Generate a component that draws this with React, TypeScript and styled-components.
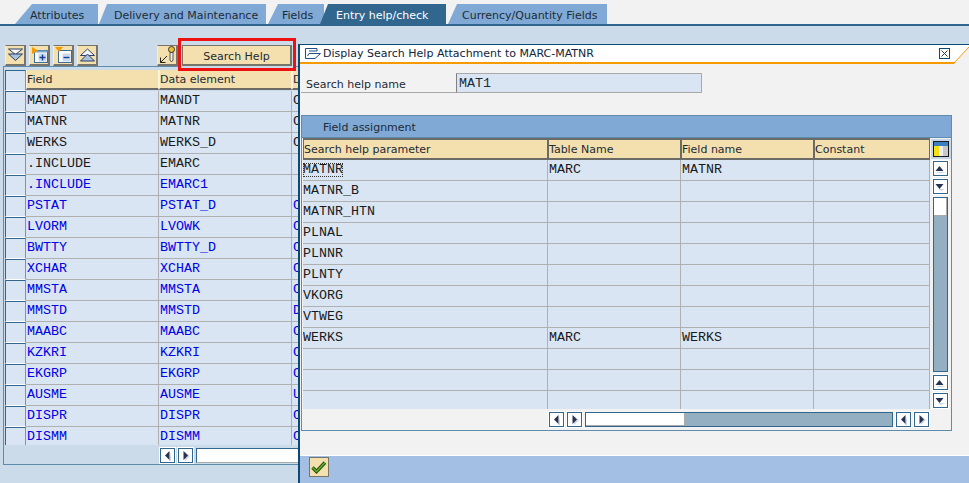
import React from 'react';
import styled, { createGlobalStyle } from 'styled-components';

const UI = '"DejaVu Sans", Tahoma, sans-serif';
const MONO = '"Liberation Mono", monospace';

const Global = createGlobalStyle`
  html, body { margin: 0; padding: 0; width: 969px; height: 483px; overflow: hidden; background: #f2f2f2; }
  * { box-sizing: border-box; }
`;
const Page = styled.div`
  width: 969px; height: 483px; position: relative; overflow: hidden;
  display: flex; flex-direction: column; background: #cbdbea;
  font-family: ${UI}; font-size: 11px; color: #1c2b36;
`;
const TabStrip = styled.div`
  height: 26px; flex: none; display: flex; align-items: flex-end; padding: 4px 0 0 15px;
  background: #f2f2f2; border-bottom: 2px solid #31678f;
`;
const Tab = styled.div<{ $w: number; $slope: number; $pad: number; $active?: boolean; $gap?: number }>`
  width: ${p => p.$w}px; height: 20px; flex: none; margin-right: ${p => p.$gap ?? 1}px;
  display: flex; align-items: center; white-space: nowrap; padding: 2px 0 0 ${p => p.$pad}px;
  background: ${p => (p.$active ? '#31678f' : '#81a9d6')};
  color: ${p => (p.$active ? '#ffffff' : '#1c2b36')};
  clip-path: polygon(0 100%, ${p => p.$slope}px 0, 100% 0, 100% 100%);
`;
const Left = styled.div`flex: 1; display: flex; flex-direction: column; padding: 19px 0 0 3px; min-height: 0;`;
const Toolbar = styled.div`height: 21px; flex: none; display: flex; gap: 3px; padding: 0 0 0 2px; align-items: flex-start;`;
const IconBtn = styled.div<{ $after?: number }>`
  width: 21px; height: 21px; flex: none; background: #f3e0ae; border: 1px solid #77746c;
  border-left-color: #f8eed0; border-right-width: 2px; border-bottom-width: 2px;
  display: flex; align-items: center; justify-content: center;
  margin-right: ${p => p.$after ?? 0}px;
`;
const SearchHelpOuter = styled.div`
  position: absolute; left: 178px; top: 38px; width: 118px; height: 33px; border: 3px solid #ee1111;
  background: #cbdbea; padding: 4px 1px 2px 1px;
`;
const SearchHelpBtn = styled.div`
  width: 100%; height: 100%; display: flex; align-items: center; justify-content: center; padding-top: 2px;
  background: #f3e0ae; border: 1px solid #77746c; border-right-width: 2px; border-bottom-width: 2px;
`;
const Frame = styled.div`
  width: 400px; height: 399px; border: 1px solid #5d8cac; border-right: none; padding: 3px 0 0 1px;
  display: flex; flex-direction: column;
`;
const LeftRow = styled.div`display: flex; height: 21px; flex: none;`;
const Sel = styled.div`width: 21px; flex: none; background: #d9e5f3; border: 1px solid #ffffff; border-left-color: #31678f; border-top-color: #31678f; border-right: 1px solid #6d9ab5;`;
const Hdr = styled.div<{ $w: number }>`
  width: ${p => p.$w}px; flex: none; height: 20px; line-height: 17px; padding-top: 1px;
  background: #f3e0ae; border-left: 1px solid #fbf3dc; border-right: 1px solid #fbf3dc; border-bottom: 2px solid #6a6a66; white-space: nowrap; overflow: hidden;
`;
const Cell = styled.div<{ $w: number; $blue?: boolean; $flush?: boolean }>`
  width: ${p => p.$w}px; flex: none; height: 21px; line-height: 20px; padding-left: ${p => (p.$flush ? 0 : 1)}px;
  background: #d9e5f3; border-right: 1px solid #b0b0b0; border-bottom: 1px solid #b0b0b0;
  font-family: ${MONO}; font-size: 13.33px; white-space: pre; overflow: hidden;
  color: ${p => (p.$blue ? '#0000e6' : '#1a1a1a')};
`;
const LeftBody = styled.div`height: 354px; overflow: hidden; flex: none;`;
const LeftScrollRow = styled.div`display: flex; align-items: center; gap: 3px; padding: 0 0 0 155px; margin-top: 3px;`;
const ScrollBtn = styled.div`
  width: 15px; height: 15px; flex: none; background: #fff; border: 1px solid #31678f; box-shadow: 0 0 0 1px #ffffff;
  display: flex; align-items: center; justify-content: center;
`;
const Track = styled.div<{ $w: number }>`
  width: ${p => p.$w}px; height: 15px; flex: none; background: #fff;
  border: 1px solid #31678f; border-right-color: #aaa; border-bottom-color: #aaa;
`;
const Popup = styled.div`
  position: absolute; left: 298px; top: 44px; width: 671px; height: 439px;
  border-left: 2px solid #0c4a76; display: flex; flex-direction: column; background: #f2f2f2;
`;
const TitleBar = styled.div`
  height: 20px; flex: none; display: flex; align-items: center; gap: 1px; padding-left: 4px;
  background: #fff; border-top: 1px solid #0c4a76; border-bottom: 2px solid #f59a00;
  position: relative; color: #12243a;
`;
const TitleText = styled.span`flex: 1; white-space: nowrap;`;
const CloseBox = styled.div`
  width: 11px; height: 11px; margin-right: 19px; border: 1px solid #0c4a76; display: flex; align-items: center; justify-content: center;
`;
const Corner = styled.svg`position: absolute; right: 0; top: 0; width: 15px; height: 19px;`;
const PopupBody = styled.div`flex: 1; min-height: 0; padding: 9px 18px 0 1px; display: flex; flex-direction: column;`;
const NameRow = styled.div`display: flex; height: 20px; flex: none;`;
const NameLabel = styled.div`
  width: 155px; height: 20px; padding-left: 5px; line-height: 23px; border-bottom: 1px solid #a9a9a9;
`;
const NameField = styled.div`
  width: 246px; height: 20px; background: #d9e5f3; border: 1px solid #a9a9a9; border-left: 1px solid #808080;
  padding-left: 2px; line-height: 19px; font-family: ${MONO}; font-size: 13.33px;
`;
const Group = styled.div`
  margin-top: 22px; width: 651px; height: 316px; border: 1px solid #5d8cac; border-top: none;
  display: flex; flex-direction: column;
`;
const GroupTitle = styled.div`
  height: 23px; flex: none; background: #81a9d6; border-top: 1px solid #5d8cac; border-bottom: 1px solid #5d8cac; padding-left: 21px;
  line-height: 23px;
`;
const GridWrap = styled.div`display: flex; flex: 1; min-height: 0;`;
const GridMain = styled.div`width: 628px; flex: none; display: flex; flex-direction: column; padding-left: 1px;`;
const PopRow = styled.div`display: flex; flex: none;`;
const PopHdr = styled(Hdr)`
  height: 22px; border-top: 2px solid #6a6a66; border-left: 1px solid #6a6a66; border-right: 1px solid #6a6a66; line-height: 17px;
`;
const PopBodyClip = styled.div`height: 249px; overflow: hidden; flex: none;`;
const Focus = styled.span`
  display: inline-block; height: 14px; line-height: 13px; margin-top: 3px; outline: 1px dotted #333333; outline-offset: -1px; vertical-align: top;
`;
const HScroll = styled.div`display: flex; gap: 3px; padding: 3px 0 0 246px; align-items: center; background: #f2f2f2;`;
const HTrack = styled.div`display: flex; width: 308px; height: 15px; flex: none; border: 1px solid #31678f; background: #93afc1;`;
const HThumb = styled.div`width: 100px; height: 13px; background: #fff; border-right: 2px solid #aaa; border-bottom: 1px solid #aaa;`;
const VScroll = styled.div`width: 21px; flex: none; display: flex; flex-direction: column; align-items: flex-start; gap: 3px; padding: 3px 0 0 3px;`;
const ConfigBtn = styled.div`
  width: 16px; height: 16px; flex: none; background: #d9e5f3; border: 1px solid #1a1a1a; margin-bottom: 1px; box-shadow: 0 0 0 2px #c4d6ea;
  display: flex; align-items: center; justify-content: center;
`;
const VTrack = styled.div`width: 15px; height: 175px; flex: none; border: 1px solid #31678f; background: #93afc1;`;
const VThumb = styled.div`height: 18px; background: #fff; border-right: 1px solid #aaa; border-bottom: 1px solid #aaa;`;
const Footer = styled.div`
  height: 28px; flex: none; background: #a3c0e4; border-top: 1px solid #fff; padding: 1px 0 0 9px;
`;
const OkBtn = styled.div`
  width: 20px; height: 20px; background: #f3e0ae; border: 1px solid #77746c; display: flex; align-items: center; justify-content: center;
`;

const Up = () => <svg width="11" height="8" viewBox="0 0 11 8"><path d="M1 7L8 7L10 8H3Z" fill="#c8d6e8"/><path d="M4.5 1 L8.5 6 H0.5Z" fill="#28324e"/></svg>;
const Down = () => <svg width="11" height="8" viewBox="0 0 11 8"><path d="M3 6H10L6 8Z" fill="#c8d6e8"/><path d="M0.5 1 H8.5 L4.5 6Z" fill="#28324e"/></svg>;
const LeftA = () => <svg width="8" height="10" viewBox="0 0 8 10"><path d="M7 1V10H5Z" fill="#c8d6e8"/><path d="M5.5 0 V9 L1 4.5Z" fill="#28324e"/></svg>;
const RightA = () => <svg width="8" height="10" viewBox="0 0 8 10"><path d="M3 1L8 5L3 10Z" fill="#c8d6e8"/><path d="M1.5 0 V9 L6 4.5Z" fill="#28324e"/></svg>;

const leftRows: [string, string, string, boolean][] = [
  ['MANDT','MANDT','C',false],['MATNR','MATNR','C',false],['WERKS','WERKS_D','C',false],
  ['.INCLUDE','EMARC','',false],['.INCLUDE','EMARC1','',true],['PSTAT','PSTAT_D','C',true],
  ['LVORM','LVOWK','C',true],['BWTTY','BWTTY_D','C',true],['XCHAR','XCHAR','C',true],
  ['MMSTA','MMSTA','C',true],['MMSTD','MMSTD','D',true],['MAABC','MAABC','C',true],
  ['KZKRI','KZKRI','C',true],['EKGRP','EKGRP','C',true],['AUSME','AUSME','U',true],
  ['DISPR','DISPR','C',true],['DISMM','DISMM','C',true],
];
const popRows = [
  ['MATNR','MARC','MATNR'],['MATNR_B','',''],['MATNR_HTN','',''],['PLNAL','',''],['PLNNR','',''],
  ['PLNTY','',''],['VKORG','',''],['VTWEG','',''],['WERKS','MARC','WERKS'],['','',''],['','',''],['','',''],
];
const popCols = [245, 133, 133, 116];

export default function App() {
  return (
    <Page>
      <Global />
      <TabStrip>
        <Tab $w={83} $slope={17} $pad={15}>Attributes</Tab>
        <Tab $w={167} $slope={8} $pad={15} $gap={2}>Delivery and Maintenance</Tab>
        <Tab $w={56} $slope={10} $pad={14} $gap={-4}>Fields</Tab>
        <Tab $w={126} $slope={8} $pad={16} $active $gap={2}>Entry help/check</Tab>
        <Tab $w={159} $slope={9} $pad={14}>Currency/Quantity Fields</Tab>
      </TabStrip>
      <Left>
        <Toolbar>
          <IconBtn><svg width="15" height="14" viewBox="0 0 15 14"><path d="M0.5 1H14.5L7.5 6.5Z" fill="#f3f6fa" stroke="#2c3e66"/><path d="M0.5 6H14.5L7.5 12.5Z" fill="#a9c2dc" stroke="#2c3e66"/></svg></IconBtn>
          <IconBtn><svg width="17" height="16" viewBox="0 0 17 16"><rect x="3.5" y="3.5" width="13" height="12" fill="#fff" stroke="#3a6d96"/><path d="M3.5 3.5H16.5V5.5H3.5Z" fill="#7ea6cf"/><path d="M1 0L7 3.5L1 7Z" fill="#f59a00"/><rect x="7.5" y="6.5" width="8" height="8" fill="#c8daee"/><path d="M8.5 10.5H14.5M11.5 7.5V13.5" stroke="#1c3f96" strokeWidth="1.4"/></svg></IconBtn>
          <IconBtn><svg width="17" height="16" viewBox="0 0 17 16"><rect x="3.5" y="3.5" width="13" height="12" fill="#fff" stroke="#3a6d96"/><path d="M0 0H8L4 5Z" fill="#f59a00"/><rect x="7.5" y="6.5" width="8" height="8" fill="#c8daee"/><path d="M8.5 10.5H14.5" stroke="#1c3f96" strokeWidth="1.4"/></svg></IconBtn>
          <IconBtn $after={56}><svg width="15" height="14" viewBox="0 0 15 14"><path d="M7.5 1L14.5 7.5H0.5Z" fill="#f3f6fa" stroke="#2c3e66"/><path d="M7.5 6L14.5 13H0.5Z" fill="#a9c2dc" stroke="#2c3e66"/></svg></IconBtn>
          <IconBtn><svg width="17" height="18" viewBox="0 0 17 18"><path d="M1.5 16.5L8 10M1.5 16.5V11.5M1.5 16.5H6.5" stroke="#222" fill="none"/><circle cx="12.5" cy="3.5" r="3" fill="#f0c030" stroke="#333"/><path d="M11 6.5H14V14L12.5 16L11 14Z" fill="#eee" stroke="#333" strokeWidth=".8"/></svg></IconBtn>
        </Toolbar>
        <Frame>
          <LeftRow>
            <Sel />
            <Hdr $w={133}>Field</Hdr>
            <Hdr $w={133}>Data element</Hdr>
            <Hdr $w={60}>D</Hdr>
          </LeftRow>
          <LeftBody>
            {leftRows.map((r, i) => (
              <LeftRow key={i}>
                <Sel />
                <Cell $w={133} $blue={r[3]}>{r[0]}</Cell>
                <Cell $w={133} $blue={r[3]}>{r[1]}</Cell>
                <Cell $w={60} $blue={r[3]}>{r[2]}</Cell>
              </LeftRow>
            ))}
          </LeftBody>
          <LeftScrollRow>
            <ScrollBtn><LeftA /></ScrollBtn>
            <ScrollBtn><RightA /></ScrollBtn>
            <Track $w={160} />
          </LeftScrollRow>
        </Frame>
      </Left>
      <SearchHelpOuter><SearchHelpBtn>Search Help</SearchHelpBtn></SearchHelpOuter>
      <Popup>
        <TitleBar>
          <svg width="18" height="13" viewBox="0 0 18 13"><path d="M1.5 1.5H13V4H5M1.5 1.5V11.5H11L16.5 6.5H5L3.5 9" fill="none" stroke="#1c4f86"/></svg>
          <TitleText>Display Search Help Attachment to MARC-MATNR</TitleText>
          <CloseBox><svg width="7" height="7" viewBox="0 0 7 7"><path d="M0.5 0.5L6.5 6.5M6.5 0.5L0.5 6.5" stroke="#333"/></svg></CloseBox>
          <Corner viewBox="0 0 15 19"><path d="M15 2V19H0Z" fill="#f2f2f2"/><path d="M0 18L15 2" stroke="#f59a00" /></Corner>
        </TitleBar>
        <PopupBody>
          <NameRow>
            <NameLabel>Search help name</NameLabel>
            <NameField>MAT1</NameField>
          </NameRow>
          <Group>
            <GroupTitle>Field assignment</GroupTitle>
            <GridWrap>
              <GridMain>
                <PopRow>
                  <PopHdr $w={245}>Search help parameter</PopHdr>
                  <PopHdr $w={133}>Table Name</PopHdr>
                  <PopHdr $w={133}>Field name</PopHdr>
                  <PopHdr $w={116}>Constant</PopHdr>
                </PopRow>
                <PopBodyClip>
                  {popRows.map((r, i) => (
                    <PopRow key={i}>
                      <Cell $w={popCols[0]} $flush>{i === 0 ? <Focus>{r[0]}</Focus> : r[0]}</Cell>
                      <Cell $w={popCols[1]}>{r[1]}</Cell>
                      <Cell $w={popCols[2]}>{r[2]}</Cell>
                      <Cell $w={popCols[3]} />
                    </PopRow>
                  ))}
                </PopBodyClip>
                <HScroll>
                  <ScrollBtn><LeftA /></ScrollBtn>
                  <ScrollBtn><RightA /></ScrollBtn>
                  <HTrack><HThumb /></HTrack>
                  <ScrollBtn><LeftA /></ScrollBtn>
                  <ScrollBtn><RightA /></ScrollBtn>
                </HScroll>
              </GridMain>
              <VScroll>
                <ConfigBtn><svg width="14" height="14" viewBox="0 0 14 14"><rect width="14" height="4" fill="#3c7fc0"/><rect y="4" width="5" height="10" fill="#f7e010"/><rect x="5" y="4" width="4" height="10" fill="#eeeeee"/><rect x="9" y="4" width="5" height="10" fill="#c8c8c8"/></svg></ConfigBtn>
                <ScrollBtn><Up /></ScrollBtn>
                <ScrollBtn><Down /></ScrollBtn>
                <VTrack><VThumb /></VTrack>
                <ScrollBtn><Up /></ScrollBtn>
                <ScrollBtn><Down /></ScrollBtn>
              </VScroll>
            </GridWrap>
          </Group>
        </PopupBody>
        <Footer>
          <OkBtn><svg width="16" height="14" viewBox="0 0 16 14"><path d="M1.5 7.5L5.5 11.5L14 2.5" fill="none" stroke="#1c4a0c" strokeWidth="3.4"/><path d="M1.5 7.5L5.5 11.5L14 2.5" fill="none" stroke="#6cb52a" strokeWidth="1.4"/></svg></OkBtn>
        </Footer>
      </Popup>
    </Page>
  );
}
